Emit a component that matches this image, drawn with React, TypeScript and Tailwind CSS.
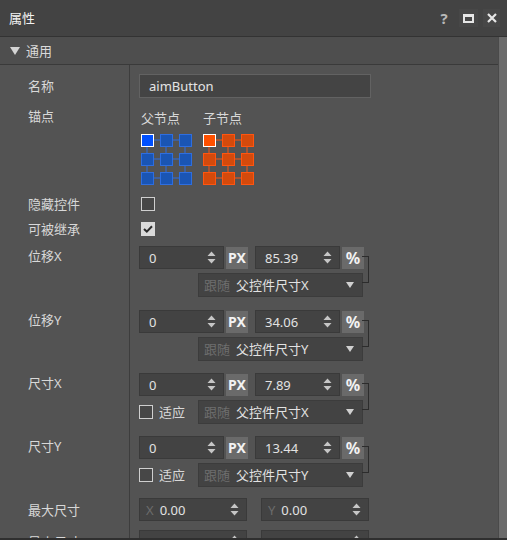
import React from "react";

const Spinner = () => (
  <svg width="9" height="15" viewBox="0 0 9 15" className="shrink-0">
    <path d="M0.5 6 L4.5 1.5 L8.5 6 Z" fill="#c6c6c6" />
    <path d="M0.5 9 L4.5 13.5 L8.5 9 Z" fill="#c6c6c6" />
  </svg>
);

const NumInput = ({ value, prefix }: { value: string; prefix?: string }) => (
  <div className={`h-[23px] ${prefix ? "w-[108px]" : "w-[85px]"} bg-[#434343] border border-[#3a3a3a] flex items-center pr-[7px] ${prefix ? "pl-[6px]" : "pl-[9px]"}`}>
    {prefix && <span className="text-[#6c6c6c] mr-[6px]">{prefix}</span>}
    <span className="flex-1 text-[#e2e2e2]">{value}</span>
    <Spinner />
  </div>
);

const UnitBtn = ({ label, big }: { label: string; big?: boolean }) => (
  <div className={`w-[22px] h-[22px] bg-[#6a6a6a] flex items-center justify-center font-bold text-[#f2f2f2] ${big ? "text-[16px]" : "text-[14px]"} ml-[2px]`}>
    {label}
  </div>
);

const Dropdown = ({ value }: { value: string }) => (
  <div className="h-[24px] w-[165px] bg-[#434343] border border-[#3c3c3c] flex items-center pl-[5px] pr-[8px]">
    <span className="text-[#6e6e6e] mr-[6px]">跟随</span>
    <span className="flex-1 text-[#e2e2e2]">{value}</span>
    <svg width="8" height="6" viewBox="0 0 8 6">
      <path d="M0 0 L8 0 L4 6 Z" fill="#d0d0d0" />
    </svg>
  </div>
);

const Checkbox = ({ checked }: { checked?: boolean }) =>
  checked ? (
    <div className="w-[14px] h-[14px] bg-[#dadada] flex items-center justify-center">
      <svg width="10" height="8" viewBox="0 0 10 8">
        <path d="M1 4 L3.8 6.6 L9 1.2" stroke="#2a2a2a" strokeWidth="2" fill="none" />
      </svg>
    </div>
  ) : (
    <div className="w-[14px] h-[14px] border border-[#cfcfcf] bg-[#474747]" />
  );

const Label = ({ text, pt, h }: { text: string; pt: string; h: string }) => (
  <div className={`w-[130px] shrink-0 border-r border-[#3d3d3d] pl-[28px] ${pt}`}>
    <div className={`${h} flex items-center text-[#d8d8d8]`}>{text}</div>
  </div>
);

const AnchorGrid = ({ color }: { color: "blue" | "orange" }) => {
  const fill = color === "blue" ? "#1a55b4" : "#d44a0c";
  const stroke = color === "blue" ? "#2e6ee0" : "#ff5510";
  const active = color === "blue" ? "#0050ff" : "#ff5000";
  const pos = [0, 19, 38];
  return (
    <svg width="51" height="51" viewBox="0 0 51 51">
      {pos.map((p) => (
        <g key={"l" + p}>
          <line x1="6" y1={p + 6} x2="44" y2={p + 6} stroke={stroke} strokeWidth="1" />
          <line x1={p + 6} y1="6" x2={p + 6} y2="44" stroke={stroke} strokeWidth="1" />
        </g>
      ))}
      {pos.map((y) =>
        pos.map((x) => {
          const isActive = x === 0 && y === 0;
          return (
            <rect
              key={x + "-" + y}
              x={x + 0.5}
              y={y + 0.5}
              width="12"
              height="12"
              fill={isActive ? active : fill}
              stroke={isActive ? "#ffffff" : stroke}
              strokeWidth="1"
            />
          );
        })
      )}
    </svg>
  );
};

const OffsetRow = ({
  label,
  v2,
  dd,
  fit,
  h,
}: {
  label: string;
  v2: string;
  dd: string;
  fit?: boolean;
  h: string;
}) => (
  <div className={`flex ${h}`}>
    <Label text={label} pt="pt-[5px]" h="h-[20px]" />
    <div className="pl-[9px] pt-[5px] flex flex-col gap-[4px]">
      <div className="relative flex items-center">
        <NumInput value="0" />
        <UnitBtn label="PX" />
        <div className="ml-[7px]">
          <NumInput value={v2} />
        </div>
        <UnitBtn label="%" big />
        <div className="absolute left-[223px] top-[10px] w-[7px] h-[27px] border-t border-r border-b border-[#2c2c2c]" />
      </div>
      <div className="flex items-center">
        {fit ? (
          <div className="w-[59px] flex items-center">
            <Checkbox />
            <span className="ml-[6px] text-[#d8d8d8]">适应</span>
          </div>
        ) : (
          <div className="w-[59px]" />
        )}
        <Dropdown value={dd} />
      </div>
    </div>
  </div>
);

export default function App() {
  return (
    <div className="w-[507px] h-[540px] bg-[#535353] flex flex-col overflow-hidden border-b-2 border-[#2f2f2f] text-[13px] font-['Noto_Sans','Noto_Sans_CJK_SC',sans-serif] leading-[18px]">
      {/* title bar */}
      <div className="h-[37px] shrink-0 bg-[#434343] border-b border-[#333333] flex items-center pl-[9px] pr-[7px]">
        <span className="text-[#f2f2f2] text-[13px] flex-1">属性</span>
        <span className="text-[#b8b8b8] font-bold text-[15px] mr-[6px] w-[18px] text-center">?</span>
        <div className="w-[19px] h-[18px] bg-[#474747] flex items-center justify-center mr-[5px]">
          <div className="w-[11px] h-[9px] border-[2px] border-t-[3px] border-[#e6e6e6]" />
        </div>
        <div className="w-[17px] h-[18px] bg-[#474747] flex items-center justify-center">
          <svg width="10" height="10" viewBox="0 0 10 10">
            <path d="M1 1 L9 9 M9 1 L1 9" stroke="#e8e8e8" strokeWidth="2.2" />
          </svg>
        </div>
      </div>
      <div className="flex flex-1 min-h-0">
        <div className="flex-1 min-w-0 overflow-hidden">
          {/* section header */}
          <div className="h-[28px] bg-[#4e4e4e] border-b border-[#3a3a3a] flex items-center pl-[10px]">
            <svg width="10" height="8" viewBox="0 0 10 8">
              <path d="M0 0 L10 0 L5 8 Z" fill="#d4d4d4" />
            </svg>
            <span className="ml-[6px] text-[#dadada]">通用</span>
          </div>
          {/* name */}
          <div className="flex h-[40px]">
            <Label text="名称" pt="pt-[9px]" h="h-[24px]" />
            <div className="pl-[9px] pt-[9px]">
              <div className="w-[232px] h-[24px] bg-[#444444] border border-[#626262] flex items-center pl-[9px] text-[#e4e4e4]">
                aimButton
              </div>
            </div>
          </div>
          {/* anchor */}
          <div className="flex h-[85px]">
            <Label text="锚点" pt="pt-[2px]" h="h-[18px]" />
            <div className="pl-[11px] pt-[4px] flex gap-[11px]">
              <div className="flex flex-col">
                <span className="text-[#d8d8d8] h-[18px] w-[51px]">父节点</span>
                <div className="mt-[7px]">
                  <AnchorGrid color="blue" />
                </div>
              </div>
              <div className="flex flex-col">
                <span className="text-[#d8d8d8] h-[18px]">子节点</span>
                <div className="mt-[7px]">
                  <AnchorGrid color="orange" />
                </div>
              </div>
            </div>
          </div>
          {/* hidden */}
          <div className="flex h-[26px]">
            <Label text="隐藏控件" pt="pt-[7px]" h="h-[14px]" />
            <div className="pl-[11px] pt-[7px]">
              <Checkbox />
            </div>
          </div>
          <div className="flex h-[25px]">
            <Label text="可被继承" pt="pt-[6px]" h="h-[14px]" />
            <div className="pl-[11px] pt-[6px]">
              <Checkbox checked />
            </div>
          </div>
          <OffsetRow label="位移X" v2="85.39" dd="父控件尺寸X" h="h-[64px]" />
          <OffsetRow label="位移Y" v2="34.06" dd="父控件尺寸Y" h="h-[63px]" />
          <OffsetRow label="尺寸X" v2="7.89" dd="父控件尺寸X" fit h="h-[63px]" />
          <OffsetRow label="尺寸Y" v2="13.44" dd="父控件尺寸Y" fit h="h-[63px]" />
          {/* max size */}
          <div className="flex h-[32px]">
            <Label text="最大尺寸" pt="pt-[4px]" h="h-[23px]" />
            <div className="pl-[9px] pt-[4px] flex gap-[14px]">
              <NumInput value="0.00" prefix="X" />
              <NumInput value="0.00" prefix="Y" />
            </div>
          </div>
          <div className="flex h-[32px]">
            <Label text="最小尺寸" pt="pt-[4px]" h="h-[23px]" />
            <div className="pl-[9px] pt-[4px] flex gap-[14px]">
              <NumInput value="0.00" prefix="X" />
              <NumInput value="0.00" prefix="Y" />
            </div>
          </div>
        </div>
        <div className="w-[9px] shrink-0 bg-[#6b6b6b] border-l border-[#4a4a4a]" />
      </div>
    </div>
  );
}
